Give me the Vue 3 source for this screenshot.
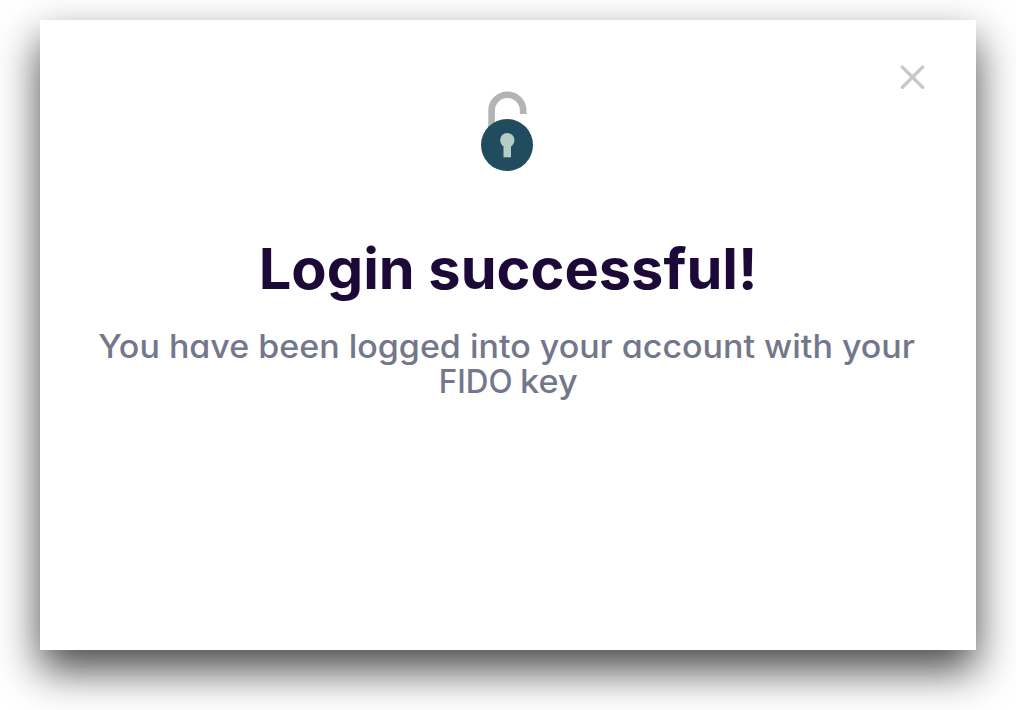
<script setup>
const message = 'You have been logged into your account with your'
</script>

<template>
  <main class="page">
    <section class="dialog" role="dialog" aria-labelledby="title">
      <button class="close" aria-label="Close">
        <svg width="26" height="26" viewBox="0 0 26 26">
          <path d="M2.4 2.1 22.6 22.3M22.6 2.1 2.4 22.3" />
        </svg>
      </button>
      <svg class="lock" width="54" height="82" viewBox="480 90 54 82">
        <path class="shackle" d="M491.6 130V110.5A15.8 15.8 0 0 1 523.2 110.5V114" />
        <circle class="body" cx="507" cy="145" r="26" />
        <circle class="hole" cx="507.3" cy="140.1" r="7.2" />
        <path class="hole" d="M503.5 142H511V157.3H503.5Z" />
      </svg>
      <h1 id="title">Login successful!</h1>
      <p>
        <span class="first">{{ message }}</span>
        <span class="second"><span class="fido">FIDO</span> <span class="key">key</span></span>
      </p>
    </section>
  </main>
</template>

<style>
body {
  margin: 0;
  background: #fff;
}
</style>

<style scoped>
.page {
  box-sizing: border-box;
  width: 1016px;
  height: 710px;
  padding: 20px 40px 60px;
  overflow: hidden;
  background: #fff;
}
.dialog {
  position: relative;
  box-sizing: border-box;
  display: flex;
  flex-direction: column;
  align-items: center;
  height: 630px;
  padding-top: 70px;
  background: #fff;
  box-shadow: 0 20px 40px rgba(0, 0, 0, 0.72);
  font-family: Inter, "Liberation Sans", sans-serif;
  font-feature-settings: "cv11" 1;
}
.close {
  position: absolute;
  top: 45px;
  right: 51px;
  width: 26px;
  height: 26px;
  margin-right: -1px;
  padding: 0;
  border: 0;
  background: none;
}
.close svg {
  display: block;
  fill: none;
  stroke: #c8c8c8;
  stroke-width: 3.4;
  stroke-linecap: round;
}
.lock {
  display: block;
  margin-right: 2px;
}
.shackle {
  fill: none;
  stroke: #b3b3b3;
  stroke-width: 6.6;
}
.body {
  fill: #214c5f;
}
.hole {
  fill: #b5cec5;
}
h1 {
  margin: 62px 0 0;
  height: 70px;
  color: #1c0938;
  font-size: 56px;
  font-weight: 700;
  line-height: 70px;
  white-space: nowrap;
  transform: scaleX(1.03);
}
p {
  display: flex;
  flex-direction: column;
  align-items: center;
  margin: 25px 0 0;
  color: #73778b;
  font-size: 32px;
  font-weight: 500;
  line-height: 35px;
  white-space: nowrap;
}
.first {
  margin-right: 3px;
  transform: scaleX(1.062);
}
.second {
  margin-right: 2px;
}
.fido,
.key {
  display: inline-block;
}
.fido {
  transform: scaleX(0.98);
}
.key {
  transform: scaleX(1.07);
}
</style>
